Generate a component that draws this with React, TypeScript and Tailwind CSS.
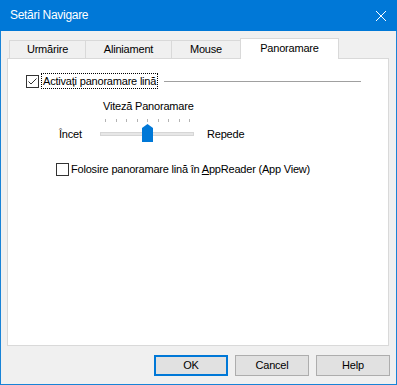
import React from 'react';

const tabs = [
  { label: 'Urmărire', w: 'w-[77px]' },
  { label: 'Aliniament', w: 'w-[87px]' },
  { label: 'Mouse', w: 'w-[70px]' },
];

function CheckBox({ checked }: { checked?: boolean }) {
  return (
    <svg width="13" height="13" viewBox="0 0 13 13" className="shrink-0">
      <rect x="0.5" y="0.5" width="12" height="12" fill="#fff" stroke="#333" />
      {checked && (
        <polyline points="2.5,6.5 5,9 10.5,3.5" fill="none" stroke="#333" strokeWidth="1" />
      )}
    </svg>
  );
}

function Slider() {
  const ticks = Array.from({ length: 9 }, (_, i) => Math.round(5 + i * 10.5) + 0.5);
  return (
    <svg width="94" height="24" viewBox="0 0 94 24" className="shrink-0">
      {ticks.map((x) => (
        <line key={x} x1={x} y1="0" x2={x} y2="3" stroke="#b4b4b4" />
      ))}
      <rect x="0.5" y="13.5" width="93" height="3" fill="#e7e7e7" stroke="#d6d6d6" />
      <path d="M42 9 L47.5 5 L53 9 V23 H42 Z" fill="#0078d7" />
    </svg>
  );
}

export default function App() {
  return (
    <div className="w-[397px] h-[385px] flex flex-col bg-[#f0f0f0] border-x border-b border-[#1883d7] font-['Liberation_Sans',Arial,sans-serif] text-[11px] leading-[13px] tracking-[-0.2px] text-black">
      {/* Title bar */}
      <div className="h-[31px] -mx-px bg-[#0078d7] flex items-center pl-[10px] pr-[10px] text-white">
        <span className="text-[12px] tracking-[-0.3px]">Setări Navigare</span>
        <svg width="10" height="10" viewBox="0 0 10 10" className="ml-auto mr-[1px]">
          <line x1="0" y1="0" x2="10" y2="10" stroke="#fff" strokeWidth="1" />
          <line x1="10" y1="0" x2="0" y2="10" stroke="#fff" strokeWidth="1" />
        </svg>
      </div>

      {/* Tabs */}
      <div className="mt-[7px] h-[20px] flex items-end pl-[8px]">
        {tabs.map((t, i) => (
          <div
            key={t.label}
            className={`${t.w} ${i > 0 ? '-ml-px' : ''} h-[18px] border-t border-x border-[#d9d9d9] flex items-center justify-center`}
          >
            {t.label}
          </div>
        ))}
        <div className="w-[99px] -ml-px h-[21px] -mb-px relative z-10 bg-white border-t border-x border-[#d9d9d9] flex items-center justify-center pb-[2px]">
          Panoramare
        </div>
      </div>

      {/* Panel */}
      <div className="ml-[6px] w-[382px] h-[288px] bg-white border border-[#d9d9d9] flex flex-col">
        <div className="mt-[14px] ml-[18px] mr-[27px] h-[16px] flex items-center">
          <CheckBox checked />
          <span className="ml-[2px] h-[16px] px-[1px] flex items-center border border-dotted border-black">
            Activați panoramare lină
          </span>
          <div className="ml-[6px] flex-1 h-px bg-[#a0a0a0]" />
        </div>

        <div className="mt-[11px] ml-[95px]">Viteză Panoramare</div>

        <div className="mt-[6px] ml-[51px] flex items-start">
          <span className="w-[41px] pt-[9px]">Încet</span>
          <Slider />
          <span className="ml-[13px] pt-[9px]">Repede</span>
        </div>

        <div className="mt-[20px] ml-[48px] flex items-center">
          <CheckBox />
          <span className="ml-[2px]">
            Folosire panoramare lină în <span className="underline">A</span>ppReader (App View)
          </span>
        </div>
      </div>

      {/* Buttons */}
      <div className="mt-[9px] flex justify-end gap-[7px] pr-[6px]">
        <button className="w-[74px] h-[21px] bg-[#e1e1e1] border-2 border-[#0078d7]">OK</button>
        <button className="w-[74px] h-[21px] bg-[#e1e1e1] border border-[#adadad]">Cancel</button>
        <button className="w-[74px] h-[21px] bg-[#e1e1e1] border border-[#adadad]">Help</button>
      </div>
    </div>
  );
}
